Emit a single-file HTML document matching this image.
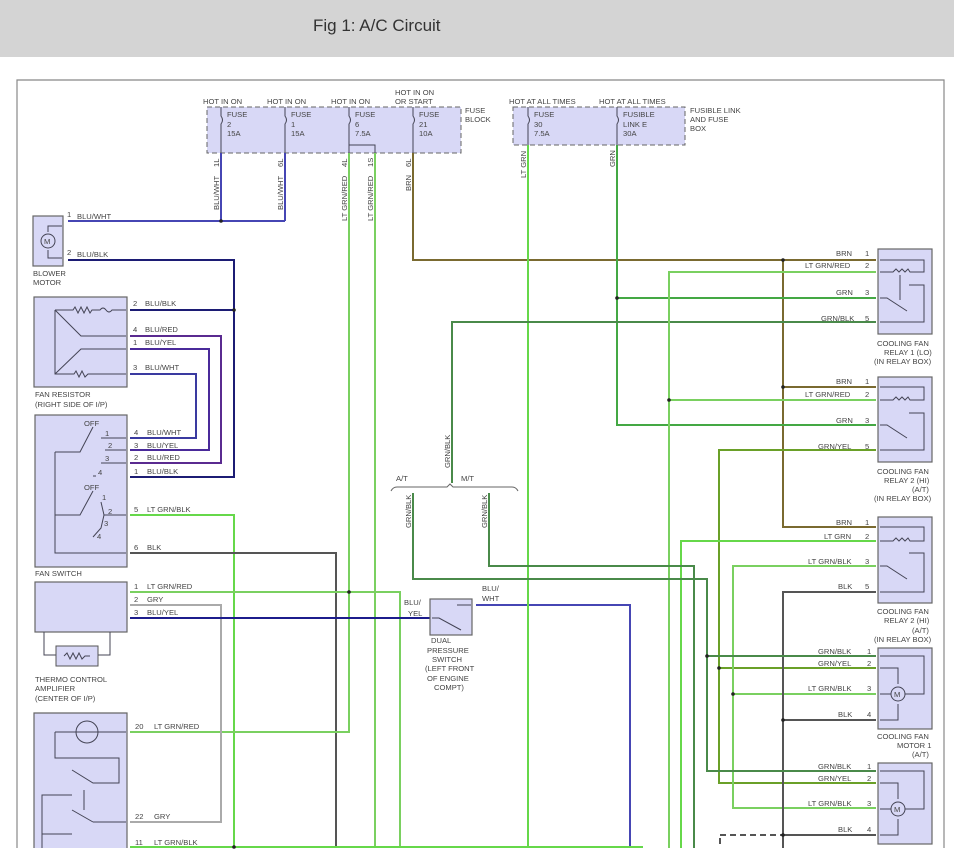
<!DOCTYPE html>
<html><head><meta charset="utf-8"><style>
html,body{margin:0;padding:0;background:#fff;}
body{width:954px;height:862px;overflow:hidden;position:relative;}
#hdr{position:absolute;left:0;top:0;width:954px;height:57px;background:#d4d4d4;}
#hdr span{position:absolute;left:313px;top:16px;font:17px "Liberation Sans",sans-serif;color:#333;}
svg{position:absolute;left:0;top:0;}
text{font-family:"Liberation Sans",sans-serif;font-size:7.6px;fill:#444;}
.box{fill:#d8d8f6;stroke:#666;stroke-width:1.2;}
.in{fill:none;stroke:#445;stroke-width:1;}
</style></head><body>
<div id="hdr"><span>Fig 1: A/C Circuit</span></div>
<svg width="954" height="862" viewBox="0 0 954 862">
<!-- frame -->
<path d="M17,848 V80 H944 V848" fill="none" stroke="#888" stroke-width="1.2"/>

<!-- fuse blocks -->
<rect x="207" y="107" width="254" height="46" fill="#d8d8f6" stroke="#666" stroke-dasharray="5,3"/>
<rect x="513" y="107" width="172" height="38" fill="#d8d8f6" stroke="#666" stroke-dasharray="5,3"/>
<g class="in">
<path d="M221,107 V116 q3,4 0,8 V153 M285,107 V116 q3,4 0,8 V153 M349,107 V116 q3,4 0,8 V153 M413,107 V116 q3,4 0,8 V153 M349,145 H375 V153"/>
<path d="M528,107 V116 q3,4 0,8 V145 M617,107 V116 q3,4 0,8 V145"/>
</g>
<text x="203" y="104">HOT IN ON</text><text x="267" y="104">HOT IN ON</text><text x="331" y="104">HOT IN ON</text>
<text x="395" y="95">HOT IN ON</text><text x="395" y="104">OR START</text>
<text x="227" y="117">FUSE</text><text x="227" y="127">2</text><text x="227" y="136">15A</text>
<text x="291" y="117">FUSE</text><text x="291" y="127">1</text><text x="291" y="136">15A</text>
<text x="355" y="117">FUSE</text><text x="355" y="127">6</text><text x="355" y="136">7.5A</text>
<text x="419" y="117">FUSE</text><text x="419" y="127">21</text><text x="419" y="136">10A</text>
<text x="465" y="113">FUSE</text><text x="465" y="122">BLOCK</text>
<text x="509" y="104">HOT AT ALL TIMES</text><text x="599" y="104">HOT AT ALL TIMES</text>
<text x="534" y="117">FUSE</text><text x="534" y="127">30</text><text x="534" y="136">7.5A</text>
<text x="623" y="117">FUSIBLE</text><text x="623" y="127">LINK E</text><text x="623" y="136">30A</text>
<text x="690" y="113">FUSIBLE LINK</text><text x="690" y="122">AND FUSE</text><text x="690" y="131">BOX</text>

<!-- vertical labels -->
<g>
<text transform="translate(219,210) rotate(-90)">BLU/WHT</text><text transform="translate(219,167) rotate(-90)">1L</text>
<text transform="translate(283,210) rotate(-90)">BLU/WHT</text><text transform="translate(283,167) rotate(-90)">6L</text>
<text transform="translate(347,221) rotate(-90)">LT GRN/RED</text><text transform="translate(347,167) rotate(-90)">4L</text>
<text transform="translate(373,221) rotate(-90)">LT GRN/RED</text><text transform="translate(373,167) rotate(-90)">1S</text>
<text transform="translate(411,191) rotate(-90)">BRN</text><text transform="translate(411,167) rotate(-90)">6L</text>
<text transform="translate(526,178) rotate(-90)">LT GRN</text>
<text transform="translate(615,167) rotate(-90)">GRN</text>
<text transform="translate(450,468) rotate(-90)">GRN/BLK</text>
<text transform="translate(411,528) rotate(-90)">GRN/BLK</text>
<text transform="translate(487,528) rotate(-90)">GRN/BLK</text>
</g>

<!-- WIRES -->
<g fill="none" stroke-width="2">
<path stroke="#4646b4" d="M68,221 H285 M221,153 V221 M285,153 V221"/>
<path stroke="#1c1c74" d="M68,260 H234 V477 H130 M130,310 H234"/>
<path stroke="#5a2a90" d="M130,336 H221 V463 H130"/>
<path stroke="#4a2a9a" d="M130,349 H209 V450 H130"/>
<path stroke="#3a3aa0" d="M130,374 H196 V438 H130"/>
<path stroke="#66d84a" d="M130,515 H234 V848"/>
<path stroke="#555" d="M130,553 H336 V848"/>
<path stroke="#7ad060" d="M349,153 V732 H130 M375,153 V848 M130,592 H400 V848"/>
<path stroke="#aaa" d="M130,605 H221 V822 H130"/>
<path stroke="#1c1c8c" d="M130,618 H430"/>
<path stroke="#4646b4" d="M476,605 H630 V848"/>
<path stroke="#66d84a" d="M130,847 H643"/>
<path stroke="#7a6a30" d="M413,153 V260 H876 M783,260 V527 H876 M783,387 H876"/>
<path stroke="#66d84a" d="M528,145 V848"/>
<path stroke="#44a844" d="M617,145 V425 H876 M617,298 H876"/>
<path stroke="#4a8a4a" d="M876,322 H452 V483"/>
<path stroke="#7ad060" d="M876,272 H669 V848 M669,400 H876"/>
<path stroke="#6aa028" d="M876,450 H719 V783 H876 M719,668 H876"/>
<path stroke="#66d84a" d="M876,541 H681 V848"/>
<path stroke="#7ad060" d="M876,566 H733 V808 H876 M733,694 H876"/>
<path stroke="#555" d="M876,592 H783 V848 M783,720 H876 M783,835 H876"/>
<path stroke="#4a8a4a" d="M489,493 V566 H694 V848 M413,493 V579 H707 V771 H876 M707,656 H876"/>
</g>
<path d="M720,835 H783 M720,838 V848" stroke="#555" stroke-width="2" fill="none" stroke-dasharray="6,4"/>
<!-- A/T M/T brace -->
<path d="M391,491 q2,-4 6,-4 H447 l3,-3 l3,3 H512 q4,0 6,4" fill="none" stroke="#666" stroke-width="1"/>
<text x="396" y="481">A/T</text><text x="461" y="481">M/T</text>

<!-- dots -->
<g fill="#222">
<circle cx="221" cy="221" r="1.8"/><circle cx="234" cy="310" r="1.8"/><circle cx="349" cy="592" r="1.8"/>
<circle cx="234" cy="847" r="1.8"/><circle cx="617" cy="298" r="1.8"/><circle cx="783" cy="260" r="1.8"/>
<circle cx="783" cy="387" r="1.8"/><circle cx="669" cy="400" r="1.8"/><circle cx="707" cy="656" r="1.8"/>
<circle cx="719" cy="668" r="1.8"/><circle cx="733" cy="694" r="1.8"/><circle cx="783" cy="720" r="1.8"/>
<circle cx="783" cy="835" r="1.8"/>
</g>

<!-- blower motor -->
<rect class="box" x="33" y="216" width="30" height="50"/>
<path class="in" d="M48,232 V226 H62 M48,250 V258 H62"/><circle cx="48" cy="241" r="7" fill="none" stroke="#445"/>
<text x="44" y="244">M</text>
<text x="67" y="217">1</text><text x="77" y="219">BLU/WHT</text>
<text x="67" y="255">2</text><text x="77" y="257">BLU/BLK</text>
<text x="33" y="276">BLOWER</text><text x="33" y="285">MOTOR</text>

<!-- fan resistor -->
<rect class="box" x="34" y="297" width="93" height="90"/>
<path class="in" d="M55,310 H73 l2,-3 3,6 3,-6 3,6 3,-6 3,6 2,-3 H100 q3,-4 6,0 q3,4 6,0 H126 M55,310 V374 H74 l2,-3 3,6 3,-6 3,6 3,-3 H126 M55,310 L81,336 H126 M55,374 L81,349 H126 M55,325 v25"/>
<text x="133" y="306">2</text><text x="145" y="306">BLU/BLK</text>
<text x="133" y="332">4</text><text x="145" y="332">BLU/RED</text>
<text x="133" y="345">1</text><text x="145" y="345">BLU/YEL</text>
<text x="133" y="370">3</text><text x="145" y="370">BLU/WHT</text>
<text x="35" y="397">FAN RESISTOR</text><text x="35" y="407">(RIGHT SIDE OF I/P)</text>

<!-- fan switch -->
<rect class="box" x="35" y="415" width="92" height="152"/>
<path class="in" d="M55,452 H80 L93,427 M55,452 V553 H126 M101,438 H126 M105,450 H126 M101,463 H126 M93,476 H96 M55,515 H80 L93,491 M101,502 L104,515 H126 M104,515 L101,528 L93,537"/>
<text x="84" y="426">OFF</text><text x="105" y="436">1</text><text x="108" y="448">2</text><text x="105" y="461">3</text><text x="98" y="475">4</text>
<text x="84" y="490">OFF</text><text x="102" y="500">1</text><text x="108" y="514">2</text><text x="104" y="526">3</text><text x="97" y="539">4</text>
<text x="134" y="435">4</text><text x="147" y="435">BLU/WHT</text>
<text x="134" y="448">3</text><text x="147" y="448">BLU/YEL</text>
<text x="134" y="460">2</text><text x="147" y="460">BLU/RED</text>
<text x="134" y="474">1</text><text x="147" y="474">BLU/BLK</text>
<text x="134" y="512">5</text><text x="147" y="512">LT GRN/BLK</text>
<text x="134" y="550">6</text><text x="147" y="550">BLK</text>
<text x="35" y="576">FAN SWITCH</text>

<!-- thermo control amplifier -->
<rect class="box" x="35" y="582" width="92" height="50"/>
<path class="in" d="M44,632 V655 H56 M110,632 V655 H98"/>
<rect x="56" y="646" width="42" height="20" fill="#d8d8f6" stroke="#555"/>
<path class="in" d="M64,656 l3,-3 3,6 3,-6 3,6 3,-6 3,6 3,-3 H90"/>
<text x="134" y="589">1</text><text x="147" y="589">LT GRN/RED</text>
<text x="134" y="602">2</text><text x="147" y="602">GRY</text>
<text x="134" y="615">3</text><text x="147" y="615">BLU/YEL</text>
<text x="35" y="682">THERMO CONTROL</text><text x="35" y="691">AMPLIFIER</text><text x="35" y="701">(CENTER OF I/P)</text>

<!-- A/C switch box bottom-left -->
<path class="box" d="M34,848 V713 H127 V848"/>
<circle cx="87" cy="732" r="11" fill="none" stroke="#445"/>
<path class="in" d="M55,732 H126 M55,732 V758 H119 V783 H93 L72,770 M42,848 V795 H72 M93,822 H126 M93,822 L72,810 M42,834 H72 M84,790 V810" />
<text x="135" y="729">20</text><text x="154" y="729">LT GRN/RED</text>
<text x="135" y="819">22</text><text x="154" y="819">GRY</text>
<text x="135" y="845">11</text><text x="154" y="845">LT GRN/BLK</text>

<!-- dual pressure switch -->
<rect class="box" x="430" y="599" width="42" height="36"/>
<path class="in" d="M432,618 H439 L461,630 M457,605 H471"/>
<text x="404" y="605">BLU/</text><text x="408" y="616">YEL</text>
<text x="482" y="591">BLU/</text><text x="482" y="601">WHT</text>
<text x="431" y="643">DUAL</text><text x="427" y="653">PRESSURE</text><text x="432" y="662">SWITCH</text>
<text x="425" y="671">(LEFT FRONT</text><text x="427" y="681">OF ENGINE</text><text x="434" y="690">COMPT)</text>

<!-- Relays -->
<g id="r1">
<rect class="box" x="878" y="249" width="54" height="85"/>
<path class="in" d="M880,260 H924 V272 H910 l-2,-3 -3,3 -3,-3 -3,3 -3,-3 -3,3 H880 M880,298 H887 L907,311 M909,285 H924 V322 H880 M900,275 V300" />
</g>
<g>
<rect class="box" x="878" y="377" width="54" height="85"/>
<path class="in" d="M880,387 H924 V400 H910 l-2,-3 -3,3 -3,-3 -3,3 -3,-3 -3,3 H880 M880,425 H887 L907,438 M909,413 H924 V450 H880"/>
</g>
<g>
<rect class="box" x="878" y="517" width="54" height="86"/>
<path class="in" d="M880,527 H924 V541 H910 l-2,-3 -3,3 -3,-3 -3,3 -3,-3 -3,3 H880 M880,566 H887 L907,579 M909,553 H924 V592 H880"/>
</g>
<g>
<rect class="box" x="878" y="648" width="54" height="81"/>
<path class="in" d="M880,656 H924 V694 H905 M880,668 H898 V684 M880,694 H891 M880,720 H898 V704"/>
<circle cx="898" cy="694" r="7" fill="#d8d8f6" stroke="#445"/><text x="894" y="697">M</text>
</g>
<g>
<rect class="box" x="878" y="763" width="54" height="81"/>
<path class="in" d="M880,771 H924 V809 H905 M880,783 H898 V799 M880,809 H891 M880,835 H898 V819"/>
<circle cx="898" cy="809" r="7" fill="#d8d8f6" stroke="#445"/><text x="894" y="812">M</text>
</g>

<!-- relay pin labels -->
<g>
<text x="836" y="256">BRN</text><text x="865" y="256">1</text>
<text x="805" y="268">LT GRN/RED</text><text x="865" y="268">2</text>
<text x="836" y="295">GRN</text><text x="865" y="295">3</text>
<text x="821" y="321">GRN/BLK</text><text x="865" y="321">5</text>
<text x="877" y="346">COOLING FAN</text><text x="884" y="355">RELAY 1 (LO)</text><text x="874" y="364">(IN RELAY BOX)</text>

<text x="836" y="384">BRN</text><text x="865" y="384">1</text>
<text x="805" y="397">LT GRN/RED</text><text x="865" y="397">2</text>
<text x="836" y="423">GRN</text><text x="865" y="423">3</text>
<text x="818" y="449">GRN/YEL</text><text x="865" y="449">5</text>
<text x="877" y="474">COOLING FAN</text><text x="884" y="483">RELAY 2 (HI)</text><text x="912" y="492">(A/T)</text><text x="874" y="501">(IN RELAY BOX)</text>

<text x="836" y="525">BRN</text><text x="865" y="525">1</text>
<text x="824" y="539">LT GRN</text><text x="865" y="539">2</text>
<text x="808" y="564">LT GRN/BLK</text><text x="865" y="564">3</text>
<text x="838" y="589">BLK</text><text x="865" y="589">5</text>
<text x="877" y="614">COOLING FAN</text><text x="884" y="623">RELAY 2 (HI)</text><text x="912" y="633">(A/T)</text><text x="874" y="642">(IN RELAY BOX)</text>

<text x="818" y="654">GRN/BLK</text><text x="867" y="654">1</text>
<text x="818" y="666">GRN/YEL</text><text x="867" y="666">2</text>
<text x="808" y="691">LT GRN/BLK</text><text x="867" y="691">3</text>
<text x="838" y="717">BLK</text><text x="867" y="717">4</text>
<text x="877" y="739">COOLING FAN</text><text x="897" y="748">MOTOR 1</text><text x="912" y="757">(A/T)</text>

<text x="818" y="769">GRN/BLK</text><text x="867" y="769">1</text>
<text x="818" y="781">GRN/YEL</text><text x="867" y="781">2</text>
<text x="808" y="806">LT GRN/BLK</text><text x="867" y="806">3</text>
<text x="838" y="832">BLK</text><text x="867" y="832">4</text>
</g>
</svg>
</body></html>
